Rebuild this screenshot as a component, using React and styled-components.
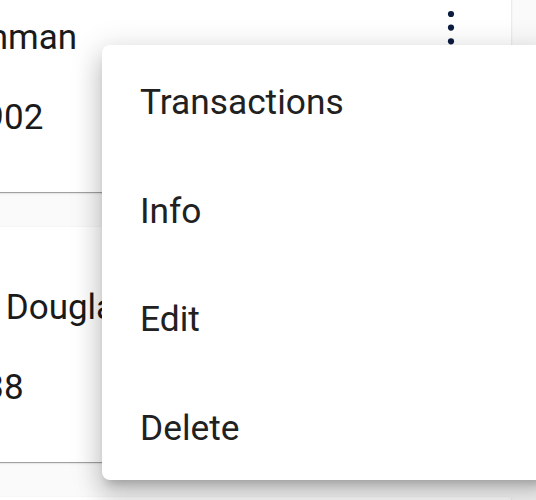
import React from "react";
import styled, { createGlobalStyle } from "styled-components";

const Global = createGlobalStyle`
  html, body { margin: 0; padding: 0; background: #fafafa; }
  body { font-family: Roboto, "Noto Sans", sans-serif; overflow: hidden; }
  * { box-sizing: border-box; }
`;

const Screen = styled.div`
  position: relative;
  width: 536px;
  height: 500px;
  overflow: hidden;
  background: #fafafa;
`;

const List = styled.div`
  display: flex;
  flex-direction: column;
  gap: 35px;
  margin: -43px 25px 0 -140px;
`;

const Card = styled.div`
  display: flex;
  align-items: flex-start;
  height: 235px;
  background: #ffffff;
  border-radius: 2px;
  box-shadow: 0 2px 1px -1px rgba(0, 0, 0, 0.22), 0 1px 1px 0 rgba(0, 0, 0, 0.14),
    0 1px 3px 0 rgba(0, 0, 0, 0.12);
  padding: 60px 55px 0 26px;
`;

const Info = styled.div`
  flex: 1;
  display: flex;
  flex-direction: column;
  gap: 39px;
  white-space: nowrap;
`;

const Line = styled.div`
  font-size: 35px;
  line-height: 41px;
  color: #1a1a1a;
`;

const More = styled.div`
  margin-top: -9px;
  margin-right: 1px;
  display: flex;
`;

const Menu = styled.ul`
  position: absolute;
  left: 102px;
  top: 45px;
  width: 450px;
  height: 435px;
  margin: 0;
  padding: 3px 0 0;
  list-style: none;
  background: #ffffff;
  border-radius: 8px;
  box-shadow: 0 8px 10px -5px rgba(0, 0, 0, 0.2), 0 16px 24px 2px rgba(0, 0, 0, 0.14),
    0 6px 30px 5px rgba(0, 0, 0, 0.12);
`;

const Item = styled.li`
  height: 108.7px;
  flex-shrink: 0;
  display: flex;
  align-items: center;
  padding-left: 38px;
  font-size: 35.3px;
  line-height: 41px;
  color: #212121;
`;

const Kebab = () => (
  <svg width="8" height="40" viewBox="0 0 8 40">
    <circle cx="4" cy="6" r="3.1" fill="#0c1d40" />
    <circle cx="4" cy="19.6" r="3.1" fill="#0c1d40" />
    <circle cx="4" cy="33.3" r="3.1" fill="#0c1d40" />
  </svg>
);

const people = [
  { name: "Rita Hinman", number: "10458902" },
  { name: "Andrea Douglas", number: "3217738" },
  { name: "Peter Walsh", number: "5521410" },
];

export default function App() {
  return (
    <Screen>
      <Global />
      <List>
        {people.map((p) => (
          <Card key={p.name}>
            <Info>
              <Line>{p.name}</Line>
              <Line>{p.number}</Line>
            </Info>
            <More>
              <Kebab />
            </More>
          </Card>
        ))}
      </List>
      <Menu>
        {["Transactions", "Info", "Edit", "Delete"].map((t) => (
          <Item key={t}>{t}</Item>
        ))}
      </Menu>
    </Screen>
  );
}
